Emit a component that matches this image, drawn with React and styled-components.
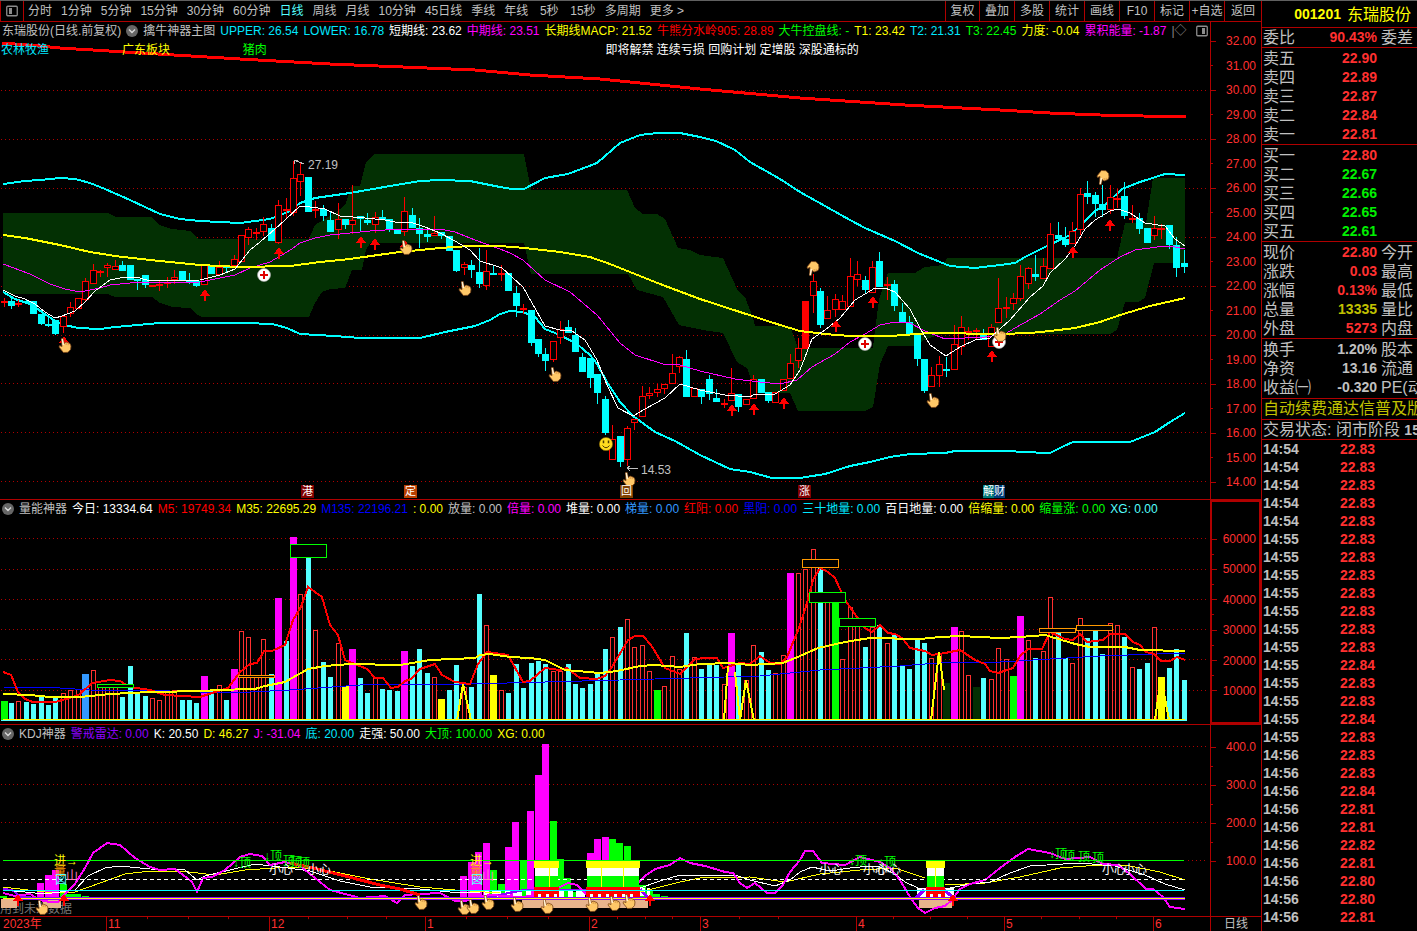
import React from "react";
import styled, { createGlobalStyle } from "styled-components";

const C = {
  line: "#b00000",
  grid: "#b00000",
  text: "#c0c0c0",
  red: "#ff3030",
  green: "#00f000",
  cyan: "#00ffff",
  yellow: "#ffff00",
  magenta: "#ff00ff",
  lime: "#00ff00",
  aqua: "#54ffff",
};

const GlobalStyle = createGlobalStyle`
  * { box-sizing: border-box; }
  body {
    margin: 0;
    background: #000;
    color: ${C.text};
    font: 12px/18px "Liberation Sans", "Noto Sans CJK SC", sans-serif;
  }
`;

const Page = styled.div`
  display: grid;
  grid-template-columns: minmax(0, 1fr) 156px;
  min-height: 100vh;
  border-top: 1px solid #606060;
`;
const Main = styled.main`
  display: flex;
  flex-direction: column;
  min-width: 0;
`;

const Toolbar = styled.nav`
  display: flex;
  height: 21px;
  border-bottom: 1px solid ${C.line};
  border-left: 1px solid ${C.line};
`;
const ToolButton = styled.button`
  display: flex;
  align-items: center;
  justify-content: center;
  min-width: ${(p) => p.$w || 33}px;
  padding: ${(p) => (p.$boxed ? "0" : "0 5px 0 4px")};
  border: 0;
  border-left: ${(p) => (p.$boxed ? `1px solid ${C.line}` : "0")};
  background: none;
  color: ${(p) => (p.$active ? "#54ffff" : C.text)};
  font: inherit;
  line-height: 20px;
  white-space: nowrap;
`;
const IconButton = styled(ToolButton)`
  min-width: 23px;
  padding: 0;
  border-right: 1px solid ${C.line};
`;
const Tabs = styled.div`
  display: flex;
  flex: 1;
  overflow: hidden;
`;

const Pane = styled.section`
  display: grid;
  grid-template-columns: minmax(0, 1fr) 51px;
  height: ${(p) => p.$h}px;
  border-bottom: 1px solid ${C.line};
`;
const PaneBody = styled.div`
  display: flex;
  flex-direction: column;
  min-width: 0;
`;
const Legend = styled.header`
  display: flex;
  align-items: center;
  gap: 5px;
  height: 18px;
  padding: 0 2px;
  overflow: hidden;
  white-space: nowrap;
`;
const LegendItem = styled.span`
  color: ${(p) => p.$c || C.text};
`;
const LegendEnd = styled.span`
  display: flex;
  margin-left: auto;
`;
const Plot = styled.div`
  position: relative;
  flex: 1;
  min-height: 0;
`;
const Canvas = styled.svg`
  display: block;
  width: 100%;
  height: 100%;
  shape-rendering: crispEdges;
  text { font-size: 12px; }
`;
const Topics = styled.div`
  position: absolute;
  top: 1px;
  left: 1px;
  right: 0;
  display: grid;
  grid-template-columns: 10% 10% 30% 1fr;
  white-space: nowrap;
`;
const Topic = styled.span`
  color: ${(p) => p.$c};
`;
const Tag = styled.span`
  position: absolute;
  bottom: 1px;
  left: ${(p) => (p.$x / 1210) * 100}%;
  height: 13px;
  padding: 0 ${(p) => (p.$tight ? 0 : 1)}px;
  background: ${(p) => p.$bg};
  color: #fff;
  font-size: 11px;
  line-height: 13px;
`;

const Axis = styled.div`
  display: flex;
  flex-direction: column;
  justify-content: space-between;
  padding: ${(p) => p.$pad};
  border: ${(p) => (p.$frame ? 2 : 0)}px solid ${C.line};
  border-left: ${(p) => (p.$frame ? 2 : 1)}px solid ${C.line};
  color: ${C.red};
`;
const AxisMark = styled.span`
  display: flex;
  align-items: center;
  justify-content: space-between;
  height: 14px;
  padding-right: ${(p) => (p.$frame ? 3 : 5)}px;
  line-height: 14px;
  &::before {
    content: "";
    width: ${(p) => (p.$minor ? 2 : 5)}px;
    height: 1px;
    background: ${C.line};
  }
`;

const DateBar = styled.footer`
  display: grid;
  grid-template-columns: minmax(0, 1fr) 51px;
  height: 14px;
  line-height: 15px;
  color: ${C.red};
`;
const Months = styled.div`
  position: relative;
  display: grid;
  grid-template-columns: 106fr 163fr 156fr 164fr 111fr 156fr 148fr 149fr 57fr;
`;
const Month = styled.span`
  padding-left: ${(p) => (p.$first ? 3 : 1)}px;
  border-left: ${(p) => (p.$first ? 0 : 1)}px solid ${C.line};
`;
const MinorTicks = styled.svg`
  position: absolute;
  inset: 0;
  width: 100%;
  height: 100%;
`;
const Period = styled.span`
  border-left: 1px solid ${C.line};
  color: ${C.text};
  text-align: center;
`;

const Side = styled.aside`
  border-left: 1px solid ${C.line};
  overflow: hidden;
  font-size: 16px;
`;
const Title = styled.h1`
  display: flex;
  justify-content: flex-end;
  gap: 6px;
  height: 27px;
  margin: 0;
  padding-right: 6px;
  border-bottom: 1px solid ${C.line};
  color: ${C.yellow};
  font-size: 16px;
  font-weight: 400;
  line-height: 27px;
  white-space: nowrap;
  b { font-size: 14px; }
`;
const Quotes = styled.table`
  width: 100%;
  table-layout: fixed;
  border-collapse: collapse;
  tbody { border-bottom: 1px solid ${C.line}; }
  tbody tr:first-child > * { padding-top: ${(p) => p.$top || 0}px; height: ${(p) => 19 + (p.$top || 0)}px; }
  tbody tr:last-child > * { padding-bottom: ${(p) => p.$bottom || 0}px; }
`;
const Name = styled.th`
  width: ${(p) => p.$w || 48}px;
  height: 19px;
  padding: 0 0 0 ${(p) => p.$l || 1}px;
  font-weight: 400;
  line-height: 19px;
  text-align: left;
  white-space: nowrap;
`;
const Value = styled.td`
  width: 67px;
  height: 19px;
  padding: 0;
  color: ${(p) => p.$c};
  font-size: 14px;
  font-weight: 700;
  line-height: 19px;
  text-align: right;
`;
const Notice = styled.p`
  height: ${(p) => p.$h}px;
  margin: 0;
  padding-left: 1px;
  border-bottom: 1px solid ${C.line};
  color: ${(p) => p.$c};
  line-height: ${(p) => p.$h - 1}px;
  white-space: nowrap;
  b { font-size: 14px; }
`;
const Ticks = styled.table`
  width: 113px;
  border-collapse: collapse;
  font-size: 14px;
  font-weight: 700;
  td { height: 18px; padding: 0 0 0 1px; line-height: 18px; }
  td + td { color: ${C.red}; text-align: right; }
`;

/* ---- data ---- */

const cx = (i) => Math.floor(4 + i * 7.423);

// kind, body top, body bottom, high, low
const CANDLES = `r301,303,298,307 c301,306,298,309 r303,305,300,307 c301,303,300,304 c301,314,301,314 c314,324,314,325 c324,326,317,327 c320,334,320,335 r316,327,315,333 r307,314,302,317
r298,309,298,309 r281,300,278,302 r270,284,264,284 r271,273,270,277 r265,268,263,277 r266,270,260,270 c265,271,261,271 c265,280,265,280 c279,281,279,290 c275,285,275,288
r285,287,285,287 r284,286,281,291 r282,284,277,288 r277,280,270,284 c271,281,271,281 c280,282,273,284 c281,286,281,287 r265,285,265,285 c266,274,266,274 r267,275,261,275
c266,268,266,272 r259,266,255,266 r235,262,235,262 r229,238,227,245 r232,234,228,240 r224,232,217,236 c228,241,224,241 r205,243,200,244 r209,211,198,218 r178,213,161,216
r174,182,163,196 c177,212,177,212 r209,211,201,218 c209,216,205,221 c220,232,211,232 r219,230,203,239 c219,225,219,229 r220,225,185,234 c216,219,216,232 c220,223,213,225
r217,225,212,233 c217,220,210,220 c219,229,219,232 c229,234,229,234 r211,232,197,236 c215,228,208,228 c228,234,218,248 c234,237,229,242 r233,236,216,236 c232,236,232,239
c236,251,236,251 c250,271,250,272 r264,268,262,275 c265,270,260,278 c272,284,248,288 r271,286,250,290 c273,275,265,275 r273,275,265,281 c273,291,273,291 c293,306,286,317
r308,310,304,314 c310,343,310,346 c339,354,339,357 c354,361,348,371 r341,360,341,362 r329,338,321,344 c327,333,320,333 c335,352,328,352 c357,372,353,372 c358,378,358,388
c374,393,374,404 c399,433,396,435 r439,460,425,460 c436,462,436,467 r428,460,426,466 r419,423,419,430 r396,417,386,417 r393,396,387,399 r389,393,384,397 r384,389,384,394
r373,384,354,384 r357,367,356,373 c359,397,350,397 r388,397,388,397 c389,397,389,404 c379,394,375,400 c398,402,389,402 r403,405,399,408 r393,401,368,401 c394,407,394,412
r399,405,399,405 r379,399,375,399 c379,393,379,393 c392,401,392,403 r392,403,392,403 r379,391,379,391 r363,379,354,379 r348,361,338,368 s301,349,301,349 r281,296,274,313
c291,325,288,328 r310,319,296,319 r299,310,294,317 r301,310,295,310 r276,307,258,307 r274,280,261,286 c280,290,276,294 r267,293,261,293 c261,287,252,287 r284,286,277,300
c284,306,280,311 c312,322,303,322 c322,334,316,336 c334,359,334,366 c359,391,359,393 r375,387,367,387 r364,376,356,387 c369,371,357,377 r344,370,325,370 r327,347,316,355
r331,333,327,340 r330,332,328,340 c334,340,329,340 r327,347,324,347 r308,323,278,323 r307,309,297,318 r298,304,293,310 r276,299,265,301 r268,284,267,289 c274,277,255,281
r266,279,258,279 r234,269,223,269 c235,239,222,241 c239,245,227,247 r231,244,222,244 r194,230,188,235 c193,197,181,204 c195,204,192,217 c204,210,185,217 r197,210,185,214
r198,200,189,208 c196,216,182,219 r218,220,205,223 c218,229,213,234 c228,243,228,243 r228,236,216,240 r228,230,224,239 c225,245,225,249 c245,268,237,277 c263,267,250,273`
  .split(/\s+/)
  .map((s) => [s[0], ...s.slice(1).split(",").map(Number)]);

// kind and bar top: r hollow, c aqua, m magenta, g green, y yellow, b blue, d dark green
const VOLUMES = `g701 c703 r701 c702 c704 c697 c705 c697 r693 r690 r689 b674 r670 r687 r686 r687 c697 c666 c692 c696
r698 r700 r692 r690 c700 c700 c703 m676 c690 r685 c700 m669 r631 r637 r677 r639 c674 m598 c641 m537
r594 c558 r630 c662 c677 r643 y686 m649 c678 c693 r678 c689 c690 c691 m651 c666 c649 c673 r677 y699
c690 c665 r687 c687 c594 r625 y675 r690 c693 c664 c688 c663 c661 c664 r671 r671 c664 c684 c688 c684
c673 c649 r637 c627 r619 r647 r645 r671 g690 r686 r656 r669 c633 r657 c669 c664 c665 r684 m633 c664
r680 r645 c652 c670 r673 r655 m573 r573 r569 r549 c568 r600 g600 r659 r607 r620 c647 r627 c625 r643
c634 c666 c669 c639 c643 r658 r653 d683 m627 r631 r675 d687 c678 r679 r648 r659 g676 m616 r640 c658
r651 r597 c633 c658 r663 r618 c638 c631 c654 r623 r625 c637 r667 c669 c663 r627 y677 c668 c649 c680`
  .split(/\s+/)
  .map((s) => [s[0], Number(s.slice(1))]);

const VOL_FILL = { c: C.aqua, m: C.magenta, g: C.lime, y: C.yellow, b: "#3399ff", d: "#033003" };

const CLOUD =
  "3,213 108,213 116,217 152,217 159,225 172,229 190,231 198,239 309,239 315,225 335,213 345,205 352,186 360,186 366,162 375,154 524,154 531,190 627,190 635,208 643,214 657,214 665,219 678,248 690,250 700,255 723,258 738,291 745,297 753,318 755,326 790,326 798,348 873,348 875,330 879,300 888,273 915,273 925,267 943,265 947,258 1117,258 1125,223 1146,223 1153,178 1185,178 1185,263 1154,263 1145,298 1138,302 1125,302 1117,330 1110,334 940,334 922,341 917,346 888,346 880,364 873,407 865,411 798,411 790,393 755,393 752,382 747,368 737,362 723,333 703,330 679,325 663,297 637,290 628,274 531,274 524,243 370,243 366,250 362,270 352,270 345,288 330,289 322,292 315,303 309,317 202,317 196,314 190,308 172,307 160,303 152,297 115,297 108,294 3,294";

const LINES = {
  ridge: "2,43 40,46 60,48 125,52 240,59 330,64 475,70 530,75 600,79 650,84 700,89 800,98 905,105 1000,110 1050,113 1100,115 1186,117",
  upper:
    "3,184 25,181 40,180 60,178 75,179 90,183 105,189 130,200 160,214 180,219 200,221 240,223 270,219 290,211 300,203 315,198 350,193 390,186 420,181 440,180 470,181 500,187 512,189 524,189 545,178 568,174 597,163 620,143 640,135 657,133 680,133 700,137 716,141 735,150 750,162 780,179 800,192 825,206 850,220 865,228 895,241 918,253 940,262 950,266 975,268 1000,265 1015,263 1025,257 1045,247 1070,235 1080,226 1095,211 1105,205 1122,189 1140,182 1165,174 1185,175",
  lower:
    "3,292 15,299 30,304 42,312 55,321 65,325 78,328 100,329 115,327 160,323 245,323 272,324 287,328 300,334 335,336 360,338 420,338 445,332 475,326 490,320 500,314 510,311 523,312 535,317 545,329 560,335 577,344 590,355 597,364 607,382 620,402 633,416 655,432 675,441 700,455 730,469 750,472 772,478 800,478 825,474 850,466 870,462 890,457 910,454 945,453 955,451 1010,451 1022,452 1050,453 1062,447 1073,442 1130,442 1155,432 1170,422 1185,413",
  yellow:
    "3,235 25,238 60,245 90,252 115,256 150,260 200,265 240,267 290,266 320,262 350,259 385,254 400,252 440,248 470,246 500,246 525,248 560,252 590,257 610,264 630,272 660,284 700,299 740,312 780,325 800,331 825,334 850,336 890,336 930,333 1000,334 1030,333 1050,331 1075,328 1100,322 1120,315 1150,306 1185,298",
  magenta:
    "3,264 30,274 50,284 65,289 80,292 100,288 110,285 130,283 200,282 215,279 235,275 250,268 270,262 292,249 300,243 315,238 330,235 370,231 400,229 440,229 455,232 475,240 500,249 510,253 523,260 545,280 570,292 597,315 620,343 635,355 663,364 680,365 700,371 735,379 760,382 780,384 797,380 812,367 835,354 850,342 865,334 880,325 895,322 910,323 925,331 945,339 985,337 1005,334 1015,328 1040,314 1060,300 1075,291 1100,270 1120,257 1135,250 1150,248 1165,246 1175,247 1185,249",
  white:
    "3,290 15,296 25,299 35,304 45,312 55,318 62,316 75,311 85,302 95,291 110,280 125,277 140,278 150,281 200,280 220,275 235,269 250,250 260,242 275,229 285,220 300,206 310,207 325,209 340,216 365,218 385,220 400,223 410,222 425,227 440,233 455,241 470,250 480,261 502,268 523,287 545,326 560,330 572,331 585,340 597,360 607,385 618,408 633,416 645,409 665,398 680,384 700,390 725,395 750,397 755,394 775,394 790,385 800,370 812,339 825,330 840,318 855,300 875,288 885,288 895,292 910,309 920,328 930,345 946,356 960,347 975,340 990,338 1000,329 1010,320 1030,297 1043,286 1050,273 1065,259 1075,246 1085,229 1095,220 1110,211 1118,209 1130,213 1145,223 1165,226 1175,239 1185,246",
  m5: "3,672 11,675 18,692 25,699 33,702 55,702 70,698 80,694 92,683 110,680 120,681 130,687 150,690 165,695 200,697 215,692 228,688 240,672 250,664 257,663 264,651 272,651 285,645 293,620 301,607 308,587 322,597 330,625 338,635 345,660 367,669 375,678 383,678 391,688 398,687 405,681 411,679 420,669 435,664 442,675 455,682 470,684 478,664 487,652 508,655 523,682 530,681 545,668 560,670 567,668 580,678 597,679 605,676 612,667 628,640 635,636 643,636 651,645 665,668 680,674 695,659 705,658 717,658 723,668 740,663 750,664 760,656 770,663 780,664 787,657 799,628 807,603 813,580 820,568 828,572 835,578 845,600 857,617 865,628 872,632 880,625 888,633 895,634 902,638 910,648 925,651 932,655 945,653 960,650 975,660 985,664 990,671 998,673 1013,668 1020,656 1028,649 1042,649 1050,632 1065,639 1073,640 1080,634 1087,642 1103,640 1110,634 1125,634 1133,642 1140,645 1146,652 1154,654 1161,661 1170,661 1177,657 1185,660",
  m35: "3,694 30,695 50,697 80,697 110,694 150,692 205,691 215,690 255,689 265,686 285,682 308,669 325,666 350,664 400,665 430,660 475,658 480,655 490,654 510,657 530,658 545,660 565,670 600,673 617,671 640,666 655,665 680,667 700,664 730,663 750,665 783,663 800,656 818,648 845,642 870,638 920,639 940,637 960,636 1000,638 1020,637 1045,635 1075,644 1090,647 1125,647 1140,650 1185,651",
  m135: "3,687 60,688 90,690 170,691 230,693 290,690 360,685 470,684 620,680 760,676 820,670 900,666 950,662 1000,662 1050,659 1100,656 1185,653",
  j: "3,893 15,896 30,894 40,900 50,902 58,902 65,894 75,884 85,868 93,853 107,843 120,845 135,858 150,867 160,870 175,869 187,878 192,882 197,892 203,878 212,877 225,870 240,857 250,854 262,856 270,865 285,862 300,866 320,882 330,890 345,894 360,898 385,896 397,903 405,895 420,894 440,893 455,901 465,901 475,898 490,895 520,897 545,895 558,888 568,883 577,885 587,895 600,895 620,893 633,888 645,876 655,869 670,865 680,858 690,863 705,866 725,872 733,873 740,883 747,888 755,883 767,893 775,893 783,885 790,872 800,860 805,851 813,851 822,863 845,865 860,857 872,860 880,862 890,868 900,880 910,897 918,908 925,913 935,908 945,906 952,900 960,889 970,884 985,880 1000,868 1015,857 1028,849 1050,853 1065,859 1090,857 1103,864 1118,865 1130,874 1146,889 1153,889 1163,897 1170,907 1185,909",
  k1: "3,890 25,892 45,894 60,892 75,890 88,876 105,868 120,866 150,869 185,870 197,880 205,876 230,870 255,864 280,867 310,871 340,881 370,887 420,889 450,892 480,892",
  k2: "640,888 660,881 680,875 735,875 750,880 775,886 790,880 800,872 812,867 830,871 850,868 870,866 880,867 895,874 905,882 918,888",
  k3: "950,888 970,884 990,882 1010,873 1030,866 1080,863 1115,866 1145,875 1165,884 1185,890",
  d1: "3,887 45,892 75,892 100,883 125,874 150,871 180,871 215,875 245,870 290,867 320,869 370,879 420,887 455,890 500,893",
  d2: "640,892 680,882 700,878 750,877 785,882 820,874 860,870 895,868 925,878",
  d3: "945,885 985,883 1020,877 1060,868 1100,865 1130,866 1160,872 1185,880",
  warn: "290,863 313,868 345,876 380,885 400,889 420,895",
};

const BOXES = [
  [97, 684, 3, C.lime], [238, 675, 2, "#ff9900"], [290, 544, 13, C.lime], [802, 559, 8, "#ff9900"],
  [809, 592, 10, C.lime], [839, 618, 8, C.lime], [1039, 628, 4, "#ff9900"], [1076, 625, 5, "#ff9900"],
];

const KDJ_BARS = [
  ["g", 0, 896], ["m", 37, 883], ["m", 45, 875], ["m", 52, 870], ["g", 60, 884], ["g", 67, 894], ["g", 74, 894], ["g", 82, 896],
  ["m", 460, 876], ["m", 468, 862], ["m", 475, 852], ["m", 483, 843], ["g", 490, 870], ["g", 498, 884],
  ["m", 505, 847], ["m", 512, 822], ["g", 520, 860], ["m", 527, 811], ["m", 535, 775], ["m", 542, 744],
  ["g", 550, 821], ["g", 557, 859], ["g", 564, 878], ["g", 571, 892], ["m", 587, 853], ["m", 594, 839], ["m", 602, 837],
  ["g", 609, 839], ["g", 616, 843], ["g", 624, 846], ["g", 639, 885], ["g", 646, 890], ["g", 653, 894], ["g", 661, 896],
];

const range = (a, b, s) => Array.from({ length: Math.floor((b - a) / s) + 1 }, (_, i) => a + i * s);

/* ---- drawing parts ---- */

const Line = ({ pts, c, w = 1 }) => <polyline points={pts} fill="none" stroke={c} strokeWidth={w} />;
const GridLine = ({ y, x = 1 }) => (
  <line x1={x} x2="1206" y1={y + 0.5} y2={y + 0.5} stroke={C.grid} strokeDasharray="1 3" />
);
const Arrow = ({ x, y }) => (
  <path transform={`translate(${x} ${y})`} d="M0,-6 L5,1 H1 V6 H-1 V1 H-5Z" fill="#ff0000" />
);
const Hand = ({ x, y, down }) => (
  <g transform={`translate(${x} ${y}) scale(1 ${down ? -1 : 1})`} shapeRendering="auto">
    <path
      d="M-3.5,-7.5 L-1.8,-7.5 L-0.8,-2.5 L1,-4 L3,-3.2 L5,-2.4 L6,0 L5.6,3.4 L3,6.3 L-1.6,6.5 L-6,1 L-5.4,-0.4 L-3,0.6Z"
      fill="#ffc868" stroke="#7a4418" strokeWidth="0.8"
    />
    <path d="M-2.8,-7 L-1.6,-1" stroke="#fff2d8" strokeWidth="1.4" />
    <path d="M1.2,-3.4 V-1 M3.2,-2.8 V-0.8" stroke="#c88438" strokeWidth="0.7" />
  </g>
);
const Cross = ({ x, y }) => (
  <g shapeRendering="auto">
    <circle cx={x} cy={y} r="6.5" fill="#fff" stroke="#aaa" strokeWidth="0.6" />
    <path d={`M${x - 4},${y} h8 M${x},${y - 4} v8`} stroke="#e00000" strokeWidth="2" />
  </g>
);
const Smiley = ({ x, y }) => (
  <g shapeRendering="auto" fill="none" stroke="#4a3800">
    <circle cx={x} cy={y} r="6.6" fill="#ffdc20" stroke="#8a6a00" strokeWidth="0.6" />
    <path d={`M${x - 3.5},${y + 1.5} q3.5,4.5 7,0`} />
    <path d={`M${x - 2.5},${y - 3.4} v2.6 M${x + 2.5},${y - 3.4} v2.6`} strokeWidth="1.5" />
  </g>
);
const ChevronBadge = () => (
  <svg width="12" height="12" viewBox="0 0 12 12" aria-hidden="true">
    <circle cx="6" cy="6" r="6" fill="#666" />
    <path d="M3,4.5 L6,7.5 L9,4.5" fill="none" stroke="#d8d8d8" strokeWidth="1.4" />
  </svg>
);
const PanelIcon = ({ right }) => (
  <svg width="12" height="12" viewBox="0 0 12 12" aria-hidden="true">
    <rect x="0.75" y="1.25" width="10.5" height="9.5" rx="1" fill="none" stroke="#8c8c8c" strokeWidth="1.3" />
    <rect x={right ? 6 : 3} y="3" width="3" height="6" fill="#8c8c8c" />
  </svg>
);

function PriceChart() {
  return (
    <Canvas viewBox="0 40 1210 459" preserveAspectRatio="none">
      {[90, 139, 188, 237, 286, 335, 383, 432, 481].map((y) => <GridLine key={y} y={y} />)}
      <polygon points={CLOUD} fill="#033003" />
      <Line pts={LINES.ridge} c="#ff0000" w={3} />
      <Line pts={LINES.upper} c={C.cyan} w={2} />
      <Line pts={LINES.lower} c={C.cyan} w={2} />
      {CANDLES.map(([k, t, b, h, l], i) => {
        const x = cx(i);
        const color = k === "c" ? C.cyan : "#ff0000";
        return (
          <g key={i}>
            <rect x={x} y={h} width="1" height={l - h} fill={color} />
            {k === "r" ? (
              <rect x={x - 2.5} y={t + 0.5} width="6" height={Math.max(b - t - 1, 1)} fill="#000" stroke={color} />
            ) : (
              <rect x={x - 3} y={t} width="7" height={b - t} fill={color} />
            )}
          </g>
        );
      })}
      <Line pts={LINES.magenta} c={C.magenta} />
      <Line pts={LINES.yellow} c={C.yellow} w={2} />
      <Line pts={LINES.white} c="#ffffff" />
      {[[205, 295], [279, 253], [361, 242], [375, 244], [405, 246], [64, 342], [732, 410], [754, 409], [784, 403], [836, 326], [873, 302], [992, 356], [1073, 252], [1110, 225]].map(([x, y]) => (
        <Arrow key={`${x}`} x={x} y={y} />
      ))}
      <Cross x={264} y={275} />
      <Cross x={865} y={344} />
      <Cross x={999} y={342} />
      <Smiley x={606} y={444} />
      {[[65, 346], [406, 248], [465, 289], [555, 375], [629, 480], [933, 401], [1000, 335]].map(([x, y]) => (
        <Hand key={x} x={x} y={y} />
      ))}
      <Hand x={813} y={268} down />
      <Hand x={1103} y={177} down />
      <path d="M294,160 L304,164 M294,160 h4 M294,160 v4 M627,468 h11 M627,468 l3,-2 M627,468 l3,3" fill="none" stroke={C.text} />
      <text x="308" y="169" fill={C.text}>27.19</text>
      <text x="641" y="474" fill={C.text}>14.53</text>
    </Canvas>
  );
}

function VolumeChart() {
  return (
    <Canvas viewBox="0 518 1210 206" preserveAspectRatio="none">
      {[538, 569, 599, 629, 659, 690].map((y) => <GridLine key={y} y={y} />)}
      {VOLUMES.map(([k, t], i) => {
        const x = cx(i);
        if (k === "r") return <rect key={i} x={x - 1.5} y={t + 0.5} width="4" height={719 - t} fill="#000" stroke={C.red} />;
        const wide = k !== "c";
        return <rect key={i} x={x - (wide ? 3 : 2)} y={t} width={wide ? 7 : 5} height={720 - t} fill={VOL_FILL[k]} />;
      })}
      <Line pts={LINES.m135} c="#0000ff" />
      <Line pts={LINES.m5} c="#ff0000" w={2} />
      <Line pts={LINES.m35} c={C.yellow} w={2} />
      <Line pts="457,720 463,684 471,720" c={C.yellow} w={2} />
      <Line pts="724,720 728,666" c={C.yellow} w={2} />
      <Line pts="735,672 740,720 746,680 754,720" c={C.yellow} w={2} />
      <Line pts="931,720 939,652 944,690" c={C.yellow} w={2} />
      <Line pts="1155,720 1161,677 1169,720" c={C.yellow} w={2} />
      {BOXES.map(([x, y, h, c]) => (
        <rect key={x} x={x + 0.5} y={y + 0.5} width="36" height={h} fill="#000" stroke={c} />
      ))}
      <rect x="3" y="719" width="1182" height="1" fill={C.yellow} />
      <rect x="1" y="720" width="1186" height="1" fill={C.aqua} />
    </Canvas>
  );
}

function Tower({ x, w, cuts }) {
  return (
    <g>
      <rect x={x - 1} y="861" width={w + 2} height="7" fill={C.yellow} />
      <rect x={x} y="868" width={w} height="8" fill="#fff" />
      <rect x={x} y="876" width={w} height="11" fill={C.lime} />
      {cuts.map((c) => <rect key={c} x={c} y="868" width="1" height="19" fill={C.yellow} />)}
      <rect x={x - 1} y="887" width={w + 2} height="11" fill="#ff0000" />
      {range(x + 3, x + w - 3, 8).map((n) => <rect key={n} x={n} y="894" width="3" height="4" fill="#fff" />)}
    </g>
  );
}

function KdjChart() {
  return (
    <Canvas viewBox="0 743 1210 173" preserveAspectRatio="none">
      {[746, 784, 822].map((y) => <GridLine key={y} y={y} />)}
      <GridLine y={860} x={1188} />
      <text x="0" y="913" fill="#777">用到未来数据</text>
      {KDJ_BARS.map(([k, x, y]) => (
        <rect key={x} x={x} y={y} width="7" height={898 - y} fill={VOL_FILL[k]} />
      ))}
      {[[1, 16], [43, 18], [522, 126], [919, 33]].map(([x, w]) => (
        <rect key={x} x={x} y="899" width={w} height="9" fill="#e8b48c" />
      ))}
      <line x1="484" x2="586" y1="893.5" y2="893.5" stroke="#fff" strokeWidth="7" strokeDasharray="5 3 9 4" />
      <line x1="640" x2="650" y1="892" y2="892" stroke="#fff" strokeWidth="8" strokeDasharray="5 2" />
      <rect x="917" y="888" width="37" height="9" fill="#fff" />
      <Line pts="3,889 12,890 20,896 34,898 484,898 524,890 534,890" c="#9000ff" w={2} />
      <Line pts="560,890 586,890 588,898" c="#9000ff" w={2} />
      <Line pts="640,889 648,898 916,898 924,890" c="#9000ff" w={3} />
      <Line pts="944,890 954,898" c="#9000ff" w={3} />
      <Line pts={LINES.d1} c={C.yellow} />
      <Line pts={LINES.d2} c={C.yellow} />
      <Line pts={LINES.d3} c={C.yellow} />
      <Line pts={LINES.k1} c="#fff" />
      <Line pts={LINES.k2} c="#fff" />
      <Line pts={LINES.k3} c="#fff" />
      <Line pts={LINES.j} c={C.magenta} w={2} />
      <line x1="3" x2="1184" y1="879.5" y2="879.5" stroke="#fff" strokeDasharray="4 3" />
      <Tower x={535} w={23} cuts={[549]} />
      <Tower x={587} w={52} cuts={[601, 623]} />
      <Tower x={927} w={17} cuts={[935]} />
      <line x1="3" x2="1184" y1="860.5" y2="860.5" stroke={C.lime} />
      <line x1="3" x2="1184" y1="890.5" y2="890.5" stroke={C.cyan} />
      <rect x="18" y="897" width="1167" height="3" fill="#9000ff" />
      <rect x="3" y="898" width="1182" height="1" fill={C.yellow} />
      <Line pts={LINES.warn} c="#ff0000" w={3} />
      <g fill={C.lime}>
        {[[233, 867], [264, 860]].map(([x, y]) => <text key={x} x={x} y={y}>↓顶</text>)}
        {[[283, 865], [290, 866], [298, 867]].map(([x, y]) => <text key={x} x={x} y={y}>顶</text>)}
        {[[849, 865], [878, 866], [1049, 858]].map(([x, y]) => <text key={x} x={x} y={y}>↓顶</text>)}
        {[[1063, 860], [1078, 861], [1092, 862]].map(([x, y]) => <text key={x} x={x} y={y}>顶</text>)}
      </g>
      <g fill="#fff">
        {[269, 307, 819, 863, 877, 1102, 1123].map((x) => <text key={x} x={x} y="874">小心</text>)}
      </g>
      {[54, 470].map((x) => (
        <g key={x}>
          <text x={x} y="865" fill={C.yellow}>进→</text>
          <text x={x} y="875" fill="#ff9900">量</text>
          <text x={x + 12} y="880" fill="#ff80c0">山</text>
          <text x={x + 1} y="884" fill={C.aqua}>図</text>
        </g>
      ))}
      {[18, 64, 650, 953].map((x) => <Arrow key={x} x={x} y={900} />)}
      {[[42, 908], [421, 903], [464, 908], [473, 907], [488, 903], [517, 905], [547, 907], [592, 905], [614, 904], [629, 902]].map(([x, y]) => (
        <Hand key={x} x={x} y={y} />
      ))}
    </Canvas>
  );
}

/* ---- page ---- */

const TABS = ["分时", "1分钟", "5分钟", "15分钟", "30分钟", "60分钟", "日线", "周线", "月线", "10分钟", "45日线", "季线", "年线", "5秒", "15秒", "多周期", "更多 >"];
const TOOLS = ["复权", "叠加", "多股", "统计", "画线", "F10", "标记", "+自选", "返回"];

const MAIN_LEGEND = [
  ["UPPER: 26.54", "#00e8ff"], ["LOWER: 16.78", "#00e8ff"], ["短期线: 23.62", "#fff"], ["中期线: 23.51", C.magenta],
  ["长期线MACP: 21.52", C.yellow], ["牛熊分水岭905: 28.89", "#ff0000"], ["大牛控盘线: -", C.lime], ["T1: 23.42", C.yellow],
  ["T2: 21.31", "#00e8ff"], ["T3: 22.45", C.lime], ["力度: -0.04", C.yellow], ["累积能量: -1.87", C.magenta],
];
const VOL_LEGEND = [
  ["量能神器"], ["今日: 13334.64", "#fff"], ["M5: 19749.34", "#ff0000"], ["M35: 22695.29", C.yellow], ["M135: 22196.21", "#0000ff"],
  [": 0.00", C.yellow], ["放量: 0.00"], ["倍量: 0.00", C.magenta], ["堆量: 0.00", "#fff"], ["梯量: 0.00", "#3399ff"],
  ["红阳: 0.00", "#ff0000"], ["黑阳: 0.00", "#0000ff"], ["三十地量: 0.00", "#00e8ff"], ["百日地量: 0.00", "#fff"],
  ["倍缩量: 0.00", C.yellow], ["缩量涨: 0.00", C.lime], ["XG: 0.00", C.aqua],
];
const KDJ_LEGEND = [
  ["KDJ神器"], ["警戒雷达: 0.00", "#9000ff"], ["K: 20.50", "#fff"], ["D: 46.27", C.yellow], ["J: -31.04", C.magenta],
  ["底: 20.00", "#00e8ff"], ["走强: 50.00", "#fff"], ["大顶: 100.00", C.lime], ["XG: 0.00", C.yellow],
];

const GROUPS = [
  { rows: [["委比", "90.43%", C.red, "委差"]] },
  { top: 1, rows: [["卖五", "22.90", C.red], ["卖四", "22.89", C.red], ["卖三", "22.87", C.red], ["卖二", "22.84", C.red], ["卖一", "22.81", C.red]] },
  { top: 1, rows: [["买一", "22.80", C.red], ["买二", "22.67", C.green], ["买三", "22.66", C.green], ["买四", "22.65", C.green], ["买五", "22.61", C.green]] },
  { top: 1, rows: [["现价", "22.80", C.red, "今开"], ["涨跌", "0.03", C.red, "最高"], ["涨幅", "0.13%", C.red, "最低"], ["总量", "13335", "#c0c000", "量比"], ["外盘", "5273", C.red, "内盘"]] },
  { top: 1, bottom: 1, rows: [["换手", "1.20%", C.text, "股本"], ["净资", "13.16", C.text, "流通"], ["收益㈠", "-0.320", C.text, "PE(动"]] },
];

const TRADES = [
  ...Array(5).fill(["14:54", "22.83"]),
  ...Array(7).fill(["14:55", "22.83"]), ["14:55", "22.84"], ["14:55", "22.83"], ["14:55", "22.83"], ["14:55", "22.84"], ["14:55", "22.83"],
  ["14:56", "22.83"], ["14:56", "22.83"], ["14:56", "22.84"], ["14:56", "22.81"], ["14:56", "22.81"], ["14:56", "22.82"],
  ["14:56", "22.81"], ["14:56", "22.80"], ["14:56", "22.80"], ["14:56", "22.81"],
];

const Items = ({ items }) => items.map(([t, c], i) => <LegendItem key={i} $c={c}>{t}</LegendItem>);
const Scale = ({ marks, ...rest }) => (
  <Axis {...rest}>
    {marks.map(([label, minor], i) => (
      <AxisMark key={i} $minor={minor} $frame={rest.$frame}>{label}</AxisMark>
    ))}
  </Axis>
);
const withMinor = (labels) => labels.flatMap((l, i) => (i ? [["", true], [l, false]] : [[l, false]]));

export default function App() {
  return (
    <Page>
      <GlobalStyle />
      <Main>
        <Toolbar>
          <IconButton aria-label="侧栏"><PanelIcon /></IconButton>
          <Tabs>
            {TABS.map((t) => <ToolButton key={t} $active={t === "日线"}>{t}</ToolButton>)}
          </Tabs>
          {TOOLS.map((t, i) => <ToolButton key={t} $boxed $w={i === 8 ? 37 : i === 0 ? 34 : 35}>{t}</ToolButton>)}
        </Toolbar>

        <Pane $h={478}>
          <PaneBody>
            <Legend>
              <LegendItem>东瑞股份(日线.前复权)</LegendItem>
              <ChevronBadge />
              <LegendItem>擒牛神器主图</LegendItem>
              <Items items={MAIN_LEGEND} />
              <LegendItem $c="#888">|◇</LegendItem>
              <LegendEnd><PanelIcon right /></LegendEnd>
            </Legend>
            <Plot>
              <PriceChart />
              <Topics>
                <Topic $c="#00e8ff">农林牧渔</Topic>
                <Topic $c={C.yellow}>广东板块</Topic>
                <Topic $c={C.lime}>猪肉</Topic>
                <Topic $c="#fff">即将解禁 连续亏损 回购计划 定增股 深股通标的</Topic>
              </Topics>
              <Tag $x={301} $bg="#800000">港</Tag>
              <Tag $x={404} $bg="#b84000">定</Tag>
              <Tag $x={620} $bg="#804000">回</Tag>
              <Tag $x={798} $bg="#800000">涨</Tag>
              <Tag $x={983} $tight $bg="linear-gradient(90deg, #007878 50%, #003c78 50%)">解财</Tag>
            </Plot>
          </PaneBody>
          <Scale $pad="12px 0 10px" marks={range(0, 18, 1).map((i) => [`${32 - i}.00`, i % 2 === 1])} />
        </Pane>

        <Pane $h={225}>
          <PaneBody>
            <Legend><ChevronBadge /><Items items={VOL_LEGEND} /></Legend>
            <Plot><VolumeChart /></Plot>
          </PaneBody>
          <Scale $frame $pad="30px 0 24px" marks={withMinor(["60000", "50000", "40000", "30000", "20000", "10000"])} />
        </Pane>

        <Pane $h={192}>
          <PaneBody>
            <Legend><ChevronBadge /><Items items={KDJ_LEGEND} /></Legend>
            <Plot><KdjChart /></Plot>
          </PaneBody>
          <Scale $pad="15px 0 48px" marks={withMinor(["400.0", "300.0", "200.0", "100.0"])} />
        </Pane>

        <DateBar>
          <Months>
            {["2023年", "11", "12", "1", "2", "3", "4", "5", "6"].map((m, i) => <Month key={m} $first={i === 0}>{m}</Month>)}
            <MinorTicks viewBox="0 0 1210 14" preserveAspectRatio="none" aria-hidden="true">
              {[147, 188, 228, 308, 347, 386, 466, 507, 548, 617, 645, 672, 739, 778, 893, 930, 967, 1041, 1079, 1116].map((x) => (
                <rect key={x} x={x} y="0" width="1" height="2" fill={C.line} />
              ))}
            </MinorTicks>
          </Months>
          <Period>日线</Period>
        </DateBar>
      </Main>

      <Side>
        <Title><b>001201</b>东瑞股份</Title>
        {GROUPS.map((g, n) => (
          <Quotes key={n} $top={g.top} $bottom={g.bottom}>
            <tbody>
              {g.rows.map(([a, v, c, b]) => (
                <tr key={a}>
                  <Name scope="row">{a}</Name>
                  <Value $c={c}>{v}</Value>
                  <Name as="td" $w={40} $l={4}>{b}</Name>
                </tr>
              ))}
            </tbody>
          </Quotes>
        ))}
        <Notice $h={21} $c="#c0c000">自动续费通达信普及版</Notice>
        <Notice $h={20} $c={C.text}>交易状态: 闭市阶段 <b>15</b></Notice>
        <Ticks>
          <tbody>
            {TRADES.map(([t, p], i) => (
              <tr key={i}><td>{t}</td><td>{p}</td></tr>
            ))}
          </tbody>
        </Ticks>
      </Side>
    </Page>
  );
}
